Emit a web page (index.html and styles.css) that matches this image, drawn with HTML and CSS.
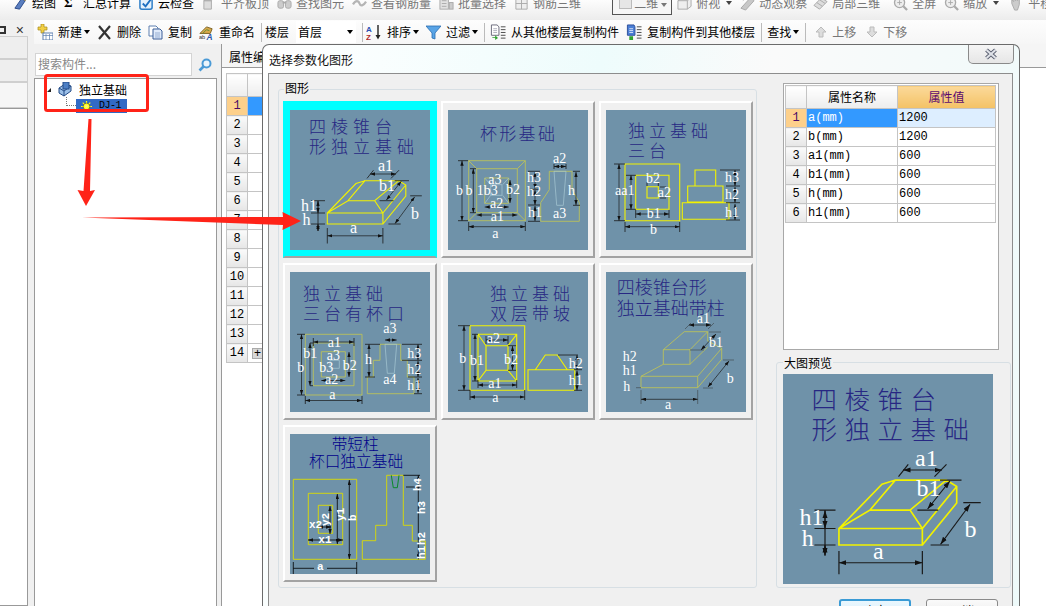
FILE: index.html
```html
<!DOCTYPE html>
<html lang="zh">
<head>
<meta charset="utf-8">
<title>选择参数化图形</title>
<link rel="stylesheet" href="styles.css">
</head>
<body>
<svg class="defs" xmlns="http://www.w3.org/2000/svg">
  <defs>
    <marker id="ah" viewBox="0 0 6 4" refX="6" refY="2" markerWidth="5" markerHeight="3.4" orient="auto-start-reverse" markerUnits="userSpaceOnUse"><path d="M0 0L6 2L0 4z" fill="#111"/></marker>
  </defs>

  <!-- toolbar icons -->
  <symbol id="i-draw" viewBox="0 0 16 16"><path d="M2 13L9 3l4 2-6 9z" fill="#5b7fc0" stroke="#2b4a8a"/><path d="M9 3l5-2-1 4" fill="#e8c24a" stroke="#8a6a20"/></symbol>
  <symbol id="i-check" viewBox="0 0 16 16"><rect x="1" y="3" width="13" height="11" rx="2" fill="#e6f1fb" stroke="#2f7fc8" stroke-width="1.6"/><path d="M4 8l3 3 6-8" fill="none" stroke="#1f6fc0" stroke-width="2"/></symbol>
  <symbol id="i-grey1" viewBox="0 0 16 16"><path d="M2 5h8v9H2z" fill="#ddd" stroke="#aaa"/><path d="M5 2h8l-3 3H2z" fill="#c9c9c9" stroke="#aaa"/></symbol>
  <symbol id="i-grey2" viewBox="0 0 16 16"><rect x="1" y="5" width="6" height="8" rx="2" fill="#ccc" stroke="#aaa"/><rect x="9" y="5" width="6" height="8" rx="2" fill="#ccc" stroke="#aaa"/><path d="M6 7h4" stroke="#aaa" stroke-width="2"/></symbol>
  <symbol id="i-grey3" viewBox="0 0 16 16"><path d="M1 9c3-5 6-4 7-1s4 3 7-2" fill="none" stroke="#b5b5b5" stroke-width="2.4"/></symbol>
  <symbol id="i-grey4" viewBox="0 0 16 16"><rect x="1" y="2" width="9" height="12" fill="#e2e2e2" stroke="#aaa"/><path d="M3 5h5M3 8h5M3 11h5" stroke="#aaa"/><rect x="11" y="7" width="4" height="7" fill="#ccc" stroke="#aaa"/></symbol>
  <symbol id="i-grey5" viewBox="0 0 16 16"><path d="M2 2v12h12V2z" fill="#eee" stroke="#aaa"/><path d="M8 2v12M2 8h12" stroke="#aaa"/></symbol>
  <symbol id="i-box" viewBox="0 0 16 16"><path d="M1 5l5-3h9v9l-4 3H1z" fill="#eee" stroke="#aaa"/><path d="M1 5h10v9M11 5l4-3" fill="none" stroke="#aaa"/></symbol>
  <symbol id="i-orbit" viewBox="0 0 16 16"><path d="M1 13L11 2l4 3-9 10z" fill="#c8c8c8" stroke="#a8a8a8"/><path d="M3 5c3-3 7-3 9-2" fill="none" stroke="#bbb"/></symbol>
  <symbol id="i-cube" viewBox="0 0 16 16"><path d="M1 10l8-8 6 4-8 8z" fill="#ddd" stroke="#aaa"/><path d="M4 7l6 4M7 4l6 4" stroke="#aaa"/></symbol>
  <symbol id="i-zoom" viewBox="0 0 16 16"><circle cx="7" cy="7" r="5.4" fill="#eee" stroke="#aaa" stroke-width="1.4"/><path d="M11 11l4 4" stroke="#aaa" stroke-width="2.4"/><path d="M4.500 7h5M7 4.500v5" stroke="#aaa"/></symbol>
  <symbol id="i-hand" viewBox="0 0 16 16"><path d="M3 8V4l2 2V2l2 3V1l2 4 2-3v7l-2 6H6z" fill="#ccc" stroke="#aaa"/></symbol>
  <symbol id="i-new" viewBox="0 0 16 16"><path d="M4 0h3v3h3v3H7v3H4V6H1V3h3z" fill="#f2cf45" stroke="#a88a1a" stroke-width=".7"/><rect x="6" y="9" width="10" height="7" fill="#fff" stroke="#5d7fb0"/><path d="M6 11.500h10M9 10v6M12.500 10v6" stroke="#5d7fb0" stroke-width=".7"/></symbol>
  <symbol id="i-x" viewBox="0 0 15 15"><path d="M2 1l11 13M13 1L2 14" stroke="#333" stroke-width="2.2"/></symbol>
  <symbol id="i-copy" viewBox="0 0 15 15"><path d="M1 1h7l2 2v8H1z" fill="#fff" stroke="#5d7fb0"/><path d="M5 4h7l2 2v8H5z" fill="#dfeafa" stroke="#3d5f98"/><path d="M7 8h5M7 10h5M7 12h5" stroke="#7a97c0" stroke-width=".7"/></symbol>
  <symbol id="i-rename" viewBox="0 0 16 16"><path d="M1 9l7-7 6 2-2 5z" fill="#d9a94a" stroke="#7a6020"/><path d="M4 9l4-4 3 1" fill="none" stroke="#5c8a3a"/><text x="8" y="15.500" class="ic-a">A</text><text x="0" y="15" class="ic-ab">ab</text></symbol>
  <symbol id="i-sort" viewBox="0 0 16 16"><text x="0" y="7.500" class="ic-az ic-blue">A</text><text x="0" y="15.500" class="ic-az ic-red">Z</text><path d="M12 1v12" stroke="#222" stroke-width="1.4"/><path d="M9.500 11L12 15.500 14.500 11z" fill="#222"/></symbol>
  <symbol id="i-filter" viewBox="0 0 15 15"><path d="M0 1h15L9 8v6l-3-1V8z" fill="#59a4e6" stroke="#2a6db0" stroke-width=".8"/></symbol>
  <symbol id="i-from" viewBox="0 0 16 17"><path d="M1 1h6l2 2v9H1z" fill="#fff" stroke="#667"/><path d="M3 5h4M3 7h4M3 9h4" stroke="#99a" stroke-width=".8"/><path d="M11 3h5M11 6h5M11 9h5M11 12h5M11 15h5" stroke="#444"/><path d="M2 14h3v-2l3 3-3 2v-2H2z" fill="#2fa32f"/></symbol>
  <symbol id="i-to" viewBox="0 0 16 17"><path d="M1 1h7l1 2v9H1z" fill="#4b7fd6" stroke="#2c4f9a"/><path d="M3 5h4M3 7h4M3 9h4" stroke="#fff" stroke-width=".8"/><path d="M11 3h5M11 6h5M11 9h5M11 12h5M11 15h5" stroke="#444"/><path d="M3 13h4v4H3z" fill="#2fa32f"/></symbol>
  <symbol id="i-up" viewBox="0 0 12 12"><path d="M6 1l5 5H8v5H4V6H1z" fill="#ddd" stroke="#bbb"/></symbol>
  <symbol id="i-down" viewBox="0 0 12 12"><path d="M6 11l5-5H8V1H4v5H1z" fill="#ddd" stroke="#bbb"/></symbol>
  <symbol id="i-search" viewBox="0 0 14 14"><circle cx="8.500" cy="5.500" r="4" fill="#eaf4fc" stroke="#4a9ad6" stroke-width="2"/><path d="M5.500 8.500L1.500 12.500" stroke="#4a9ad6" stroke-width="2.600"/></symbol>
  <symbol id="i-found" viewBox="0 0 16 16"><path d="M1 6l6-4 6 2v5l-7 5-5-3z" fill="#9cc0e8" stroke="#234a86"/><path d="M1 6l5 3 7-5M6 9v5" fill="none" stroke="#234a86"/><rect x="5" y="0" width="6" height="7" fill="#4d7fc4" stroke="#234a86"/></symbol>
  <symbol id="i-sun" viewBox="0 0 11 11"><path d="M5.500 0v11M0 5.500h11M1.700 1.700l7.600 7.600M9.300 1.700L1.700 9.300" stroke="#ffff20" stroke-width="1.200"/><circle cx="5.500" cy="5.500" r="3.400" fill="#ffff20" stroke="#333" stroke-width=".6"/><circle cx="5.500" cy="5.500" r="1.400" fill="#fff27a"/></symbol>

  <!-- diagrams -->
  <symbol id="d-pyramid" viewBox="0 0 140 140">
    <text class="t t17 sp5" x="19" y="23">四棱锥台</text>
    <text class="t t17 sp5" x="19" y="43">形独立基础</text>
    <path class="y b" d="M37.300 103h55.600v11H37.300zM37.300 103L58 90.700h26.700l8.200 12.300M58 90.700L75 70.700M37.300 103L66 73.500l9-2.800h33.900l6.900 4.300v11L92.900 114M92.900 103l22.900-28M84.700 90.700l24.200-20"/>
    <path class="tick" d="M37.300 118v15.500M92.900 118v15.500M21 90.700h14M21 103h14M21 114h14M77 68.400l6.500-8.200M101 68.400l8-8.200M104.700 70.700H119M89.600 90.700h13.900M120.200 85.800h11.600M98.400 114h12.300M28 90.700V121"/>
    <g class="dim" marker-start="url(#ah)" marker-end="url(#ah)"><path d="M37.300 125.800h55.600"/><path d="M80 64h26"/><path d="M111.300 71.300L96.400 90"/><path d="M124.700 86.900L105 113.600"/><path d="M28 91v12"/><path d="M28 114l0 7"/></g>
    <text class="w w18" x="60" y="123">a</text><text class="w w18" x="11" y="100.900">h1</text><text class="w w18" x="12.500" y="114.700">h</text><text class="w w18" x="88" y="61">a1</text><text class="w w18" x="89" y="81">b1</text><text class="w w18" x="121" y="108.700">b</text>
  </symbol>

  <symbol id="d-cup" viewBox="0 0 140 140">
    <text class="t t17 sp2" x="32" y="30">杯形基础</text>
    <path class="o" d="M20.700 50.700h56.600v60H20.700zM28.700 58.700h40.600v44H28.700zM36.700 68h24v25.300h-24zM20.700 50.700l8 8M77.300 50.700l-8 8M20.700 110.700l8-8M77.300 110.700l-8-8M101.300 61.300H124v18l7.300 13.400v18.600H92.700V92.700l8.600-13z"/>
    <path class="l" d="M42.700 74.700H54v10.600H42.700zM36.700 68l6 6.700M60.700 68l-6 6.700M36.700 93.300l6-8M60.700 93.300l-6-8M106 61.300h12l-2.700 34h-6.600z"/>
    <path class="tick" d="M10 50.700h10M10 110.700h10M22 58.700h6M22 102.700h6M20.700 112v9M77.300 112v9M80 61.300h12M80 79.300h12M80 95h12M80 111.300h12M125 61.300h7M125 95.300h7M106 54v5M118 54v5"/>
    <g class="dim" marker-start="url(#ah)" marker-end="url(#ah)"><path d="M14 50.700v60"/><path d="M25.300 58.700v44"/><path d="M20.700 116.700h56.600"/><path d="M28.700 105h40.600"/><path d="M62 70v23"/><path d="M36.700 97h24"/><path d="M106 56.500h12"/><path d="M128 62v33"/><path d="M87 62v17"/><path d="M87 80v15"/><path d="M87 96v15"/></g>
    <text class="w w14" x="105" y="52.700">a2</text><text class="w w14" x="105" y="107.700">a3</text><text class="w w14" x="79" y="72">h3</text><text class="w w14" x="79" y="86">h2</text><text class="w w14" x="80" y="106.700">h1</text><text class="w w14" x="120" y="85.300">h</text><text class="w w14" x="8" y="85.300">b</text><text class="w w14" x="17.600" y="85.300">b</text><text class="w w14" x="28.700" y="85.300">1b3</text><text class="w w14" x="58" y="84.300">b2</text><text class="w w14" x="40.300" y="74.300">a3</text><text class="w w14" x="42" y="97.700">a2</text><text class="w w14" x="42.700" y="111">a1</text><text class="w w14" x="44.300" y="127.700">a</text>
  </symbol>

  <symbol id="d-three" viewBox="0 0 140 140">
    <text class="t t17 sp4" x="22" y="27">独立基础</text>
    <text class="t t17 sp4" x="22" y="47">三台</text>
    <path class="y b" d="M19 54h54.700v56.700H19zM29.700 65.300H63v34H29.700zM41 76.700h11.300V88H41zM76.300 92.700H123v16.600H76.300zM81.700 76H117v16H81.700zM89 60h20.700v16H89z"/>
    <path class="tick" d="M8 54h11M8 110.700h11M20 65.300h10M20 99.300h10M19 112v10M73.700 112v10M29.700 100v8M63 100v8M114 60h20M120 76h14M120 92.700h14M120 110h14M41 72v4M52.300 72v4M54 77h6M54 88h6"/>
    <g class="dim" marker-start="url(#ah)" marker-end="url(#ah)"><path d="M13 54v56.700"/><path d="M25 65.300v34"/><path d="M19 116.700h54.700"/><path d="M29.700 104H63"/><path d="M129 60v16"/><path d="M129 77v15.700"/><path d="M129 94v16"/></g>
    <text class="w w14" x="9" y="85.300">aa1</text><text class="w w14" x="40" y="73.300">b2</text><text class="w w14" x="51.700" y="86.700">a2</text><text class="w w14" x="40.700" y="108.300">b1</text><text class="w w14" x="44" y="124">b</text><text class="w w14" x="119" y="72">h3</text><text class="w w14" x="119" y="89.300">h2</text><text class="w w14" x="119" y="106.700">h1</text>
  </symbol>

  <symbol id="d-three-cup" viewBox="0 0 140 140">
    <text class="t t17 sp4" x="13" y="28">独立基础</text>
    <text class="t t17 sp4" x="13" y="48">三台有杯口</text>
    <path class="o" d="M15.300 62.300H72V123H15.300zM23.300 71H64v42.700H23.300zM31.300 79.700h24V105h-24zM90 72.300h20.700v16h6.600V105H124v16.700H77.300V105h6V88.300H90z"/>
    <path class="l" d="M40 88.300h9.300v8H40zM95 72.300h11.700l-2.400 29h-7z"/>
    <path class="tick" d="M7 62.300h8M7 123h8M20 71h3M20 113.700h3M15.300 124v8M72 124v8M23.300 66v8M64 66v8M75 72.300h15M75 105h10M112 72.300h20M112 88.300h20M118 105h14M124 121.700h8"/>
    <g class="dim" marker-start="url(#ah)" marker-end="url(#ah)"><path d="M11.500 62.300V123"/><path d="M20 71v42.700"/><path d="M15.300 128.500H72"/><path d="M23.300 70H64"/><path d="M31.300 108.500h24"/><path d="M59 80v25"/><path d="M95 68h11.700"/><path d="M79 72.300V105"/><path d="M128 72.300v16"/><path d="M128 89v16"/><path d="M128 106v15"/></g>
    <text class="w w14" x="93.300" y="60.700">a3</text><text class="w w14" x="37.700" y="75">a1</text><text class="w w14" x="13.300" y="85.700">b1</text><text class="w w14" x="36.700" y="88.300">a3</text><text class="w w14" x="29.300" y="100">b3</text><text class="w w14" x="52.700" y="98.300">b2</text><text class="w w14" x="7.300" y="99.700">b</text><text class="w w14" x="35" y="112.300">a2</text><text class="w w14" x="39.300" y="127.300">a</text><text class="w w14" x="75" y="91.700">h</text><text class="w w14" x="93.300" y="112.300">a4</text><text class="w w14" x="117.300" y="85.700">h3</text><text class="w w14" x="117.300" y="101.700">h2</text><text class="w w14" x="117.300" y="118.300">h1</text>
  </symbol>

  <symbol id="d-double" viewBox="0 0 140 140">
    <text class="t t17 sp4" x="42" y="28">独立基础</text>
    <text class="t t17 sp4" x="42" y="48">双层带坡</text>
    <path class="y b" d="M22 53.700h54.700v64.600H22zM30 62.300h38.700V109H30zM38 73.700h22v24.600H38zM30 62.300l8 11.400M68.700 62.300L60 73.700M30 109l8-10.700M68.700 109L60 98.300M80 97.700h46.700v20.600H80zM87.300 97.700L97.300 83h12l10 14.700"/>
    <path class="tick" d="M10 53.700h12M10 118.300h12M22 118v10M76.700 118v10M30 108v8M68.700 108v8M60 73.700h8M60 98.300h8M38 64v8M60 64v8M110 83h20M126 97.700h8M126 118.300h8M24 62.300h6M24 109h6"/>
    <g class="dim" marker-start="url(#ah)" marker-end="url(#ah)"><path d="M16 53.700v64.600"/><path d="M27 62.300V109"/><path d="M22 125h54.700"/><path d="M30 113h38.700"/><path d="M64.500 74v24"/><path d="M38 68h22"/><path d="M129 83v14.700"/><path d="M129 98.500v19.800"/></g>
    <text class="w w14" x="38.700" y="70.700">a2</text><text class="w w14" x="11.300" y="90.700">b</text><text class="w w14" x="22" y="93">b1</text><text class="w w14" x="56" y="91.700">b2</text><text class="w w14" x="40.300" y="115.700">a1</text><text class="w w14" x="44.300" y="129.700">a</text><text class="w w14" x="120.700" y="95.700">h2</text><text class="w w14" x="120.700" y="113">h1</text>
  </symbol>

  <symbol id="d-column" viewBox="0 0 140 140">
    <text class="t t18" x="10.700" y="22.300">四棱锥台形</text>
    <text class="t t18" x="10.700" y="43">独立基础带柱</text>
    <path class="o" d="M35 104.300h56.700v11.400H35zM35 104.300l22.300-12M57.300 77.700H84v14.600H57.300zM57.300 77.700l21-18h23.400L84 77.700M101.700 59.700V69M84 92.300L101.700 75M101.700 69l14 7.300v11L91.700 115.700M91.700 104.300l24-28"/>
    <path class="thin" d="M35 118v14M91.700 118v14M79 57l6-6M102 57l6-6M103 60h12M84 78h14M117 88h11M97 116h10M30 115.700h5"/>
    <g class="dim" marker-start="url(#ah)" marker-end="url(#ah)"><path d="M35 127.300h56.700"/><path d="M83 53h22"/><path d="M110 62L95 78" /><path d="M123 89l-21 26"/></g>
    <text class="w w14" x="90.700" y="50.700">a1</text><text class="w w14" x="103" y="75">b1</text><text class="w w14" x="120.700" y="110.700">b</text><text class="w w14" x="59" y="137.300">a</text><text class="w w14" x="16.700" y="89">h2</text><text class="w w14" x="16.700" y="103.300">h1</text><text class="w w14" x="17.300" y="119">h</text>
  </symbol>

  <symbol id="d-short" viewBox="0 0 140 140">
    <text class="t t16 dark" x="41.700" y="16.300">带短柱</text>
    <text class="t t16 dark" x="19" y="32.700">杯口独立基础</text>
    <path class="y2" d="M3.300 45.300h63.400v80H3.300zM18.300 59.300h34.400v51.400H18.300zM28.300 71.300h14.400v28H28.300zM96.700 41.300h16.600v50h9v15.700h13v18.300H72.300v-18.600h13.400V91.300h11z"/>
    <path class="green" d="M101.300 41.300l2 12.400h4l1.700-12.400"/>
    <path class="blk" d="M113.300 41.300H130M116 53h14M3.300 128v14M66.700 128v14"/>
    <g class="blk" marker-start="url(#ah)" marker-end="url(#ah)"><path d="M59.300 46v79"/><path d="M47.300 60v50"/><path d="M40 72v28"/><path d="M128.300 41.300v84"/><path d="M18 106h35"/><path d="M28 93h13"/></g>
    <path class="blk" d="M3.300 134.300H24M37 134.300h29.700"/>
    <text class="m" x="19" y="94.300">x2</text><text class="m" x="28.300" y="109.300">x1</text><text class="m" x="27" y="136.300">a</text>
    <text class="m" transform="translate(66 87) rotate(-90)">b</text>
    <text class="m" transform="translate(54 87) rotate(-90)">y1</text>
    <text class="m" transform="translate(39 92) rotate(-90)">y2</text>
    <text class="m" transform="translate(131 57) rotate(-90)">h4</text>
    <text class="m" transform="translate(135 80) rotate(-90)">h3</text>
    <text class="m" transform="translate(135 111) rotate(-90)">h2</text>
    <text class="m" transform="translate(135 125) rotate(-90)">h1</text>
  </symbol>
</svg>

<div class="topbar">
  <div class="tool on"><svg class="ico"><use href="#i-draw"/></svg>绘图</div>
  <div class="tool on"><span class="ico sigma">Σ</span>汇总计算</div>
  <div class="tool on"><svg class="ico"><use href="#i-check"/></svg>云检查</div>
  <div class="tool"><svg class="ico"><use href="#i-grey1"/></svg>平齐板顶</div>
  <div class="tool"><svg class="ico"><use href="#i-grey2"/></svg>查找图元</div>
  <div class="tool"><svg class="ico"><use href="#i-grey3"/></svg>查看钢筋量</div>
  <div class="tool"><svg class="ico"><use href="#i-grey4"/></svg>批量选择</div>
  <div class="tool"><svg class="ico"><use href="#i-grey5"/></svg>钢筋三维</div>
  <div class="view-combo"><span class="swatch"></span><span class="combo-text">二维</span><span class="caret"></span></div>
  <div class="tool after-combo"><svg class="ico"><use href="#i-box"/></svg>俯视<span class="caret"></span></div>
  <div class="tool"><svg class="ico"><use href="#i-orbit"/></svg>动态观察</div>
  <div class="tool tight"><svg class="ico"><use href="#i-cube"/></svg>局部三维</div>
  <span class="bar-sep"></span>
  <div class="tool after-sep"><svg class="ico"><use href="#i-zoom"/></svg>全屏</div>
  <div class="tool"><svg class="ico"><use href="#i-zoom"/></svg>缩放<span class="caret"></span></div>
  <div class="tool wide"><svg class="ico"><use href="#i-hand"/></svg>平移</div>
</div>

<div class="workspace">
  <aside class="dock">
    <div class="dock-head"><span class="pin"></span><span class="dock-x">×</span></div>
    <div class="dock-tab"></div>
    <div class="dock-tab"></div>
    <div class="dock-tab last"></div>
    <div class="dock-body"></div>
  </aside>

  <div class="content">
    <div class="toolbar">
      <div class="btn"><svg class="i16"><use href="#i-new"/></svg>新建<span class="caret"></span></div>
      <div class="btn"><svg class="i15"><use href="#i-x"/></svg>删除</div>
      <div class="btn"><svg class="i15"><use href="#i-copy"/></svg>复制</div>
      <div class="btn"><svg class="i15"><use href="#i-rename"/></svg>重命名</div>
      <span class="sep"></span>
      <div class="btn">楼层</div>
      <div class="floor-select">首层<span class="caret"></span></div>
      <span class="sep"></span>
      <div class="btn"><svg class="i16"><use href="#i-sort"/></svg>排序<span class="caret"></span></div>
      <div class="btn"><svg class="i15"><use href="#i-filter"/></svg>过滤<span class="caret"></span></div>
      <span class="sep"></span>
      <div class="btn nudge"><svg class="i16"><use href="#i-from"/></svg>从其他楼层复制构件</div>
      <div class="btn"><svg class="i16"><use href="#i-to"/></svg>复制构件到其他楼层</div>
      <span class="sep"></span>
      <div class="btn nudge">查找<span class="caret"></span></div>
      <span class="sep"></span>
      <div class="btn off nudge-up"><svg class="i12"><use href="#i-up"/></svg>上移</div>
      <div class="btn off nudge-down"><svg class="i12"><use href="#i-down"/></svg>下移</div>
    </div>

    <div class="panes">
      <section class="tree-pane">
        <div class="search-row">
          <div class="search">搜索构件...</div>
          <svg class="search-ico"><use href="#i-search"/></svg>
        </div>
        <div class="tree">
          <div class="node root"><span class="expander"></span><svg class="i16"><use href="#i-found"/></svg>独立基础</div>
          <div class="node leaf"><span class="branch"></span><span class="leaf-sel"><svg class="sun"><use href="#i-sun"/></svg>DJ-1</span></div>
        </div>
      </section>

      <section class="props">
        <div class="prop-tab"><span>属性编辑</span></div>
        <div class="prop-body">
          <table class="grid prop-grid">
            <tr class="head"><th class="rh"></th><th></th></tr>
            <tr><th class="rh cur">1</th><td class="sel"></td></tr>
            <tr><th class="rh">2</th><td></td></tr>
            <tr><th class="rh">3</th><td></td></tr>
            <tr><th class="rh">4</th><td></td></tr>
            <tr><th class="rh">5</th><td></td></tr>
            <tr><th class="rh">6</th><td></td></tr>
            <tr><th class="rh">7</th><td></td></tr>
            <tr><th class="rh">8</th><td></td></tr>
            <tr><th class="rh">9</th><td></td></tr>
            <tr><th class="rh">10</th><td></td></tr>
            <tr><th class="rh">11</th><td></td></tr>
            <tr><th class="rh">12</th><td></td></tr>
            <tr><th class="rh">13</th><td></td></tr>
            <tr><th class="rh">14</th><td><span class="plus">+</span></td></tr>
          </table>
        </div>
      </section>
    </div>
  </div>
</div>

<div class="dialog">
  <div class="dialog-title">选择参数化图形<span class="close"><svg viewBox="0 0 14 12" class="close-x"><path class="x-out" d="M2.500 2l9 8M11.500 2l-9 8"/><path class="x-in" d="M2.500 2l9 8M11.500 2l-9 8"/></svg></span></div>
  <div class="frame">
    <div class="frame-row">
      <section class="group shapes">
        <div class="group-label">图形</div>
        <div class="shape-grid">
          <div class="shape active"><svg class="thumb"><use href="#d-pyramid"/></svg></div>
          <div class="shape"><svg class="thumb"><use href="#d-cup"/></svg></div>
          <div class="shape"><svg class="thumb"><use href="#d-three"/></svg></div>
          <div class="shape"><svg class="thumb"><use href="#d-three-cup"/></svg></div>
          <div class="shape"><svg class="thumb"><use href="#d-double"/></svg></div>
          <div class="shape"><svg class="thumb"><use href="#d-column"/></svg></div>
          <div class="shape"><svg class="thumb"><use href="#d-short"/></svg></div>
        </div>
      </section>
      <div class="side">
        <div class="attr-box">
          <table class="grid attr-grid">
            <tr class="head"><th class="rh"></th><th class="c1">属性名称</th><th class="c2">属性值</th></tr>
            <tr><th class="rh cur">1</th><td class="sel">a(mm)</td><td class="sel-val">1200</td></tr>
            <tr><th class="rh">2</th><td>b(mm)</td><td>1200</td></tr>
            <tr><th class="rh">3</th><td>a1(mm)</td><td>600</td></tr>
            <tr><th class="rh">4</th><td>b1(mm)</td><td>600</td></tr>
            <tr><th class="rh">5</th><td>h(mm)</td><td>600</td></tr>
            <tr><th class="rh">6</th><td>h1(mm)</td><td>600</td></tr>
          </table>
        </div>
        <section class="group preview">
          <div class="group-label">大图预览</div>
          <svg class="big"><use href="#d-pyramid"/></svg>
        </section>
      </div>
    </div>
    <div class="footer">
      <button class="dbtn primary">确定</button>
      <button class="dbtn">取消</button>
    </div>
  </div>
</div>

<svg class="marks" viewBox="0 0 1046 606" xmlns="http://www.w3.org/2000/svg">
  <rect class="mark-box" x="45.500" y="75.500" width="102" height="35" rx="2"/>
  <path class="mark-fill" d="M91.500 119L90 191l5-1-9 16-8.500-16 6 1 5-72z"/>
  <path class="mark-fill" d="M82 217.500L283 217l-.5-5 18.500 9-18.500 9 .5-5z"/>
</svg>
</body>
</html>
```

FILE: styles.css
```css
* { box-sizing: border-box; }
html, body { margin: 0; padding: 0; }
body {
  width: 1046px;
  height: 606px;
  overflow: hidden;
  position: relative;
  background: #f0f0f0;
  color: #000;
  font: 12px/14px "Noto Sans CJK SC", "Liberation Sans", sans-serif;
}
.defs { display: block; width: 0; height: 0; }

/* ---------- top bar ---------- */
.topbar {
  height: 20px;
  display: flex;
  align-items: flex-start;
  padding-left: 13px;
  overflow: hidden;
  background: linear-gradient(#fdfdfd, #ececec);
}
.tool {
  display: flex;
  align-items: center;
  gap: 4px;
  margin: -4px 0 0 8px;
  color: #777;
  white-space: nowrap;
  height: 14px;
}
.tool:first-child { margin-left: 0; }
.tool.on { color: #000; }
.tool.tight { margin-left: 6px; }
.tool.after-combo { margin-left: 5px; }
.tool.after-sep { margin-left: 5px; }
.tool.wide { margin-left: 10px; }
.ico { width: 15px; height: 15px; flex: none; }
.sigma { font: bold 13px/14px "Liberation Serif", serif; color: #000; }
.view-combo {
  margin: -6px 0 0 31px;
  width: 60px;
  height: 21px;
  flex: none;
  border: 1px solid #555;
  background: #f6f6f6;
  color: #777;
  display: flex;
  align-items: flex-start;
  padding: 1px 4px 0 6px;
  gap: 1px;
}
.swatch { width: 13px; height: 13px; flex: none; background: #e6e6e6; border: 1px solid #bbb; }
.combo-text { margin-left: 1px; white-space: nowrap; }
.view-combo .caret { margin: 7px 0 0 auto; }
.caret {
  flex: none;
  width: 0;
  height: 0;
  border: 3px solid transparent;
  border-top: 4px solid currentColor;
  border-bottom: 0;
}
.tool .caret { margin-left: 2px; color: #444; }
.bar-sep { width: 1px; height: 15px; background: #aaa; margin-left: 8px; }

/* ---------- workspace ---------- */
.workspace { display: flex; height: 586px; }
.dock { width: 34px; flex: none; display: flex; flex-direction: column; background: #f0f0f0; }
.dock-head {
  width: 28px;
  height: 16px;
  display: flex;
  align-items: center;
  justify-content: space-between;
  padding: 4px 4px 0 0;
}
.pin { width: 6px; height: 8px; border: 2px solid #333; border-left: 0; }
.dock-x { font: 14px/12px "Liberation Sans", sans-serif; color: #333; }
.dock-tab { width: 28px; height: 23px; background: #eee; border: 1px solid #cfcfcf; border-left: 0; }
.dock-tab.last { height: 26px; background: #f6f6f6; }
.dock-body { width: 28px; flex: 1; background: #fff; border: 1px solid #999; border-left: 0; }

.content { flex: 1; min-width: 0; display: flex; flex-direction: column; }
.toolbar {
  height: 24px;
  flex: none;
  display: flex;
  align-items: center;
  gap: 7px;
  padding-left: 3px;
  background: linear-gradient(#fdfdfd, #f6f6f6);
  white-space: nowrap;
}
.btn { display: flex; align-items: center; gap: 5px; }
.btn .caret { margin-left: -3px; }
.btn.off { color: #777; }
.btn.nudge { margin-left: 2px; }
.btn.nudge-up { margin-left: 6px; }
.btn.nudge-down { margin-left: 3px; }
.i16 { width: 16px; height: 16px; flex: none; }
.i15 { width: 15px; height: 15px; flex: none; }
.i12 { width: 12px; height: 12px; flex: none; }
.sep { width: 1px; height: 19px; background: #bbb; margin: 0 -4px 0 -1px; }
.floor-select {
  width: 60px;
  height: 22px;
  background: #fff;
  display: flex;
  align-items: center;
  justify-content: space-between;
  padding: 0 3px 0 2px;
}
.ic-a { font: italic bold 9px "Liberation Sans", sans-serif; fill: #2b57a8; }
.ic-ab { font: 6px "Liberation Sans", sans-serif; fill: #333; }
.ic-az { font: bold 8px "Liberation Sans", sans-serif; }
.ic-blue { fill: #2a4fb0; }
.ic-red { fill: #b02a2a; }

.panes { flex: 1; display: flex; min-height: 0; }
.tree-pane { width: 183px; flex: none; display: flex; flex-direction: column; padding-top: 9px; }
.search-row { display: flex; align-items: center; height: 23px; padding-left: 1px; margin-bottom: 2px; }
.search {
  width: 157px;
  height: 23px;
  background: #fff;
  border: 1px solid #d4d4d4;
  color: #888;
  padding: 3px 0 0 2px;
  font-size: 12px;
}
.search-ico { width: 14px; height: 14px; margin-left: 6px; }
.tree { flex: 1; background: #fff; border: 1px solid #999; border-bottom: 0; padding: 2px 0 0 12px; }
.node { display: flex; align-items: center; }
.root { height: 17px; }
.expander {
  width: 0;
  height: 0;
  border-style: solid;
  border-width: 0 0 4px 4px;
  border-color: transparent transparent #222 transparent;
  margin-right: 7px;
}
.root .i16 { margin-right: 5px; }
.root { font-size: 12px; }
.leaf { height: 14px; margin-top: 1px; }
.branch { width: 10px; height: 9px; margin: -9px 0 0 19px; border-left: 1px dotted #777; border-bottom: 1px dotted #777; }
.leaf-sel {
  width: 51px;
  height: 14px;
  background: #316ac5;
  display: flex;
  align-items: center;
  gap: 7px;
  padding-left: 5px;
  font: 10px/14px "Liberation Mono", monospace;
  letter-spacing: -.5px;
}
.sun { width: 11px; height: 11px; flex: none; }

.props { flex: 1; margin-left: 4px; border-left: 1px solid #999; display: flex; flex-direction: column; min-width: 0; }
.prop-tab { height: 24px; flex: none; background: #f5f5f5; border-bottom: 1px solid #999; padding: 6px 0 0 7px; }
.prop-body { flex: 1; background: #fff; padding: 5px 0 0 4px; }

/* ---------- tables ---------- */
.grid { border-collapse: collapse; table-layout: fixed; background: #fff; }
.grid th, .grid td {
  border: 1px solid #c4c4c4;
  padding: 0;
  height: 19px;
  font: 12px/14px "Liberation Mono", "Noto Sans CJK SC", monospace;
}
.grid .rh { background: linear-gradient(#fafafa, #e6e6e6); text-align: center; }
.grid .head th { height: 23px; background: linear-gradient(#fff, #ededed); }
.grid .rh.cur { background: #fdd08b; color: #4b0a66; }
.grid td { padding-left: 1px; }
.grid td.sel { background: #3399ff; color: #fff; }
.grid td.sel-val { background: #ddeeff; }
.prop-grid { width: 200px; }
.prop-grid .rh { width: 21px; }
.plus {
  display: block;
  width: 11px;
  height: 11px;
  margin-left: 3px;
  background: #d8d8d8;
  border: 1px solid #aaa;
  font: 12px/9px "Liberation Sans", sans-serif;
  text-align: center;
}

/* ---------- dialog ---------- */
.dialog {
  position: absolute;
  left: 262px;
  top: 44px;
  width: 758px;
  height: 562px;
  overflow: hidden;
  background: linear-gradient(100deg, #fff 0, #eefcfc 40%, #fafafa 60%, #eefafa 100%);
  border: 1px solid #6b6b6b;
  border-bottom: 0;
  border-radius: 7px 7px 0 0;
}
.dialog-title {
  height: 28px;
  position: relative;
  padding: 8px 0 0 6px;
  color: #111;
}
.close {
  position: absolute;
  right: 5px;
  top: -1px;
  width: 46px;
  height: 20px;
  border: 1px solid #8a8a8a;
  border-top: 0;
  border-radius: 0 0 5px 5px;
  background: linear-gradient(#f6f6f6, #e6e6e6);
  display: flex;
  align-items: center;
  justify-content: center;
}
.close-x { width: 14px; height: 12px; }
.close-x path { fill: none; }
.x-out { stroke: #5a5f70; stroke-width: 4; }
.x-in { stroke: #dfe2e8; stroke-width: 2.200px; }
.frame {
  margin-left: 5px;
  width: 745px;
  height: 560px;
  background: #f0f0f0;
  border: 1px solid #8d8d8d;
}
.frame-row { display: flex; align-items: flex-start; gap: 19px; padding: 9px 0 0 9px; }
.group { border: 1px solid #d7dfe4; border-radius: 3px; }
.group-label { width: max-content; background: #f0f0f0; padding: 0 1px; }
.shapes { width: 479px; height: 499px; margin-top: 6px; }
.shapes .group-label { margin: -9px 0 0 5px; }
.shape-grid {
  display: grid;
  grid-template-columns: repeat(3, 154px);
  grid-auto-rows: 157px;
  column-gap: 4px;
  row-gap: 5px;
  margin: 6px 0 0 4px;
}
.shape {
  display: flex;
  align-items: center;
  justify-content: center;
  background: #f0f0f0;
  border: 2px solid;
  border-color: #fff #a3a3a3 #a3a3a3 #fff;
}
.shape.active { background: #00ffff; border-color: #00ffff; border-bottom-color: #a3a3a3; }
.thumb { width: 140px; height: 140px; background: #6f92a9; display: block; }
.side { width: 235px; flex: none; }
.attr-box {
  width: 216px;
  height: 267px;
  margin-left: 7px;
  background: #fff;
  border: 1px solid #a8a8a8;
  padding: 1px;
}
.attr-grid { width: 211px; }
.attr-grid .rh { width: 21px; }
.attr-grid .c1 { width: 91px; }
.attr-grid .c1, .attr-grid .c2 { font: 12px/14px "Noto Sans CJK SC", sans-serif; }
.attr-grid .head .c2 { background: linear-gradient(#fbd99a, #f4c265); color: #5b0a6e; }
.preview { height: 226px; margin-top: 12px; width: 235px; padding-left: 6px; }
.preview .group-label { margin: -7px 0 0 0; }
.big { display: block; width: 210px; height: 210px; margin-top: 4px; background: #6f92a9; }
.footer { display: flex; justify-content: flex-end; gap: 15px; padding: 11px 14px 0 0; }
.dbtn {
  width: 72px;
  height: 24px;
  background: linear-gradient(#fafafa, #e8e8e8);
  border: 1px solid #8a8a8a;
  border-radius: 3px;
  font: 12px/14px "Noto Sans CJK SC", sans-serif;
  padding: 0;
}
.dbtn.primary { border: 2px solid #3a9bd5; background: linear-gradient(#eaf7fe, #d6eefb); }

/* ---------- diagram drawing ---------- */
.t { font-family: "Noto Sans CJK SC", sans-serif; font-weight: 300; fill: #272783; }
.t17 { font-size: 17px; }
.t18 { font-size: 18px; }
.t16 { font-size: 15.700px; }
.sp5 { letter-spacing: 5px; }
.sp4 { letter-spacing: 4px; }
.sp2 { letter-spacing: 2.300px; }
.dark { fill: #00008b; }
.w { font-family: "Liberation Serif", serif; fill: #fff; }
.w18 { font-size: 16px; }
.w14 { font-size: 14px; }
.m { font: bold 11px "Liberation Mono", monospace; fill: #fff; }
.y, .o, .l, .y2, .green, .tick, .blk, .thin { fill: none; }
.y { stroke: #f2f200; stroke-width: 1; }
.y.b { stroke-width: 1.100px; }
.y2 { stroke: #dcdc00; stroke-width: .9px; }
.o { stroke: #c4c650; stroke-width: .8px; }
.l { stroke: #a8c8d4; stroke-width: .7px; }
.green { stroke: #0a8a2a; stroke-width: 1; }
.tick { stroke: #1a1a1a; stroke-width: .8px; }
.thin { stroke: #333; stroke-width: .5px; }
.blk { stroke: #000; stroke-width: .8px; }
.dim { fill: none; stroke: #1a1a1a; stroke-width: .7px; }

/* ---------- red annotations over the screenshot ---------- */
.marks { position: absolute; left: 0; top: 0; width: 1046px; height: 606px; pointer-events: none; }
.mark-box { fill: none; stroke: #ff2318; stroke-width: 3; }
.mark-fill { fill: #ff2318; }
```
